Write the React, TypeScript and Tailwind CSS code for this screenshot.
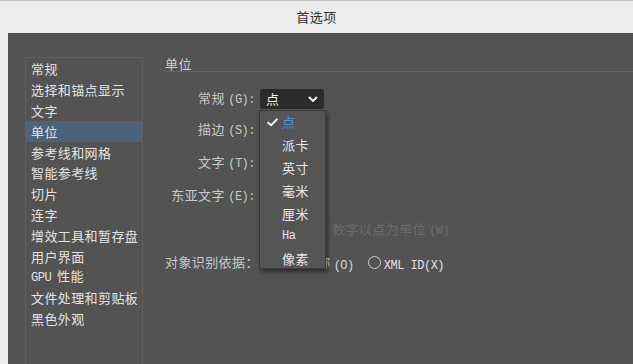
import React from "react";

const M = ({ children }: { children: React.ReactNode }) => (
  <span className="font-['Liberation_Mono',monospace] text-[12px] tracking-[-0.5px]">{children}</span>
);

const sidebar: React.ReactNode[] = [
  "常规",
  "选择和锚点显示",
  "文字",
  "单位",
  "参考线和网格",
  "智能参考线",
  "切片",
  "连字",
  "增效工具和暂存盘",
  "用户界面",
  <>
    <M>GPU</M>
    <span className="inline-block w-[6px]" />
    性能
  </>,
  "文件处理和剪贴板",
  "黑色外观",
];

const menuItems = ["点", "派卡", "英寸", "毫米", "厘米", "Ha", "像素"];

function Chevron() {
  return (
    <svg width="10" height="7" viewBox="0 0 10 7">
      <polyline points="1.5,1.5 5,5 8.5,1.5" fill="none" stroke="#f0f0f0" strokeWidth="2" strokeLinecap="round" strokeLinejoin="round" />
    </svg>
  );
}

function Check() {
  return (
    <svg width="11" height="9" viewBox="0 0 11 9">
      <polyline points="1.2,4.6 4,7.4 9.8,1.4" fill="none" stroke="#f2f2f2" strokeWidth="2" strokeLinecap="round" strokeLinejoin="round" />
    </svg>
  );
}

function Radio() {
  return <span className="block w-[13px] h-[13px] rounded-full border-[1.5px] border-[#d0d0d0] shrink-0" />;
}

function Label({ cjk, key2 }: { cjk: string; key2: string }) {
  return (
    <div className="w-[92px] text-right text-[#c9c9c9] text-[13px] tracking-[0.4px] leading-[20px] whitespace-nowrap">
      {cjk}
      {" "}
      <M>({key2}):</M>
    </div>
  );
}

export default function App() {
  return (
    <div className="w-[633px] h-[364px] overflow-hidden flex flex-col bg-[#ececec] font-['Noto_Sans_CJK_SC',sans-serif] border-t border-[#c4c4c4]">
      <div className="h-[32px] shrink-0 flex items-center justify-center text-[13px] text-[#333333] tracking-[0.5px]">
        首选项
      </div>
      <div className="flex-1 flex pl-[8px]">
        <div className="flex-1 flex bg-[#535353]">
          {/* sidebar */}
          <div className="ml-[17px] mt-[24px] w-[118px] border border-b-0 border-[#5f5f5f] pt-[1px] shrink-0">
            {sidebar.map((s, i) => (
              <div
                key={i}
                className={
                  "h-[20.8px] flex items-center pl-[5px] text-[13px] tracking-[0.4px] leading-[20px] whitespace-nowrap text-[#e2e2e2] " +
                  (i === 3 ? "bg-[#4b627a]" : "")
                }
              >
                <span>{s}</span>
              </div>
            ))}
          </div>

          {/* content */}
          <div className="ml-[20px] flex-1 pt-[22px] flex flex-col">
            <div className="h-[17px] border-b border-[#636363] pl-[2px] text-[13px] tracking-[0.4px] leading-[17px] text-[#d0d0d0]">
              单位
            </div>

            <div className="mt-[17px] flex items-center h-[20px]">
              <Label cjk="常规" key2="G" />
              <div className="relative ml-[5px]">
                <div className="w-[64px] h-[20px] rounded-[3px] bg-[#2a2a2a] flex items-center justify-between pl-[6px] pr-[6px] text-[13px] leading-[20px] text-[#f0f0f0]">
                  <span>点</span>
                  <Chevron />
                </div>
                {/* dropdown menu */}
                <div className="absolute left-[-1px] top-[21px] w-[67px] h-[159px] bg-[#555555] border border-[#3b3b3b] shadow-[2px_3px_4px_rgba(0,0,0,0.45)] z-10">
                  {menuItems.map((m, i) => (
                    <div key={m} className="h-[22.8px] flex items-center">
                      <div className="w-[22px] flex justify-center pl-[2px]">{i === 0 ? <Check /> : null}</div>
                      <span
                        className={
                          (m === "Ha"
                            ? "font-['Liberation_Mono',monospace] text-[12px] tracking-[-0.5px] "
                            : "text-[13px] tracking-[0.4px] ") +
                          "leading-[20px] " +
                          (i === 0 ? "text-[#4d8ee0]" : "text-[#e6e6e6]")
                        }
                      >
                        {m}
                      </span>
                    </div>
                  ))}
                </div>
              </div>
            </div>

            <div className="mt-[11px] flex items-center h-[20px]">
              <Label cjk="描边" key2="S" />
            </div>
            <div className="mt-[13px] flex items-center h-[20px]">
              <Label cjk="文字" key2="T" />
            </div>
            <div className="mt-[13px] flex items-center h-[20px]">
              <Label cjk="东亚文字" key2="E" />
            </div>

            <div className="mt-[14px] flex items-center h-[20px]">
              <div className="ml-[99px] w-[12px] h-[12px] border border-[#6a6a6a] shrink-0" />
              <span className="ml-[58px] text-[13px] tracking-[0.4px] leading-[20px] text-[#6c6c6c] whitespace-pre">
                数字以点为单位 <M>(W)</M>
              </span>
            </div>

            <div className="mt-[12px] flex items-center h-[20px] whitespace-nowrap">
              <span className="pl-[2px] text-[13px] tracking-[0.4px] leading-[20px] text-[#c9c9c9]">对象识别依据：</span>
              <div className="ml-[26px]">
                <Radio />
              </div>
              <span className="ml-[6px] text-[13px] tracking-[0.4px] leading-[20px] text-[#d8d8d8]">名称</span>
              <span className="ml-[3px] text-[#d8d8d8]">
                <M>(O)</M>
              </span>
              <div className="ml-[14px]">
                <Radio />
              </div>
              <span className="ml-[3px] text-[#e0e0e0] whitespace-pre">
                <M>XML ID(X)</M>
              </span>
            </div>
          </div>
        </div>
      </div>
    </div>
  );
}
